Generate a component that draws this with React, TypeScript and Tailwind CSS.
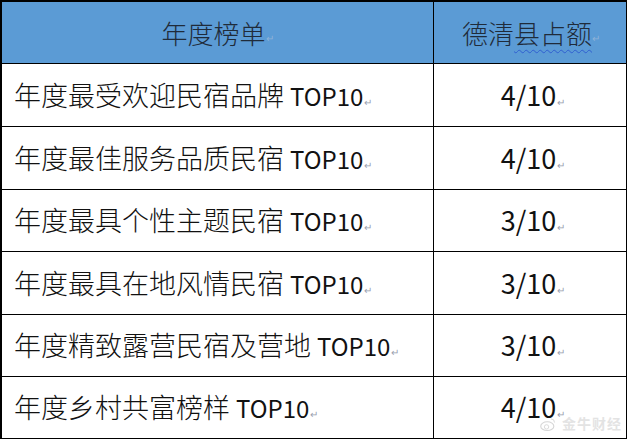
import React from "react";

const rows = [
  ["年度最受欢迎民宿品牌", "4/10"],
  ["年度最佳服务品质民宿", "4/10"],
  ["年度最具个性主题民宿", "3/10"],
  ["年度最具在地风情民宿", "3/10"],
  ["年度精致露营民宿及营地", "3/10"],
  ["年度乡村共富榜样", "4/10"],
];
const heights = ["h-[63px]", "h-[63px]", "h-[62px]", "h-[63px]", "h-[62px]", "h-[62px]"];

const Mark = () => <span className="text-[10px] text-gray-400 align-baseline ml-[1px]">↵</span>;

export default function App() {
  return (
    <div
      className="relative w-[630px] h-[440px] bg-white overflow-hidden"
      style={{ fontFamily: '"Noto Sans CJK SC", "Noto Sans", sans-serif' }}
    >
      <div className="w-[627px] border-l-2 border-t-2 border-black grid grid-cols-[432px_193px]">
        <div className="h-[62px] bg-[#5b9bd5] border-r border-b border-black flex items-center justify-center text-[26px] font-light text-[#1f2b3a]">
          <span>年度榜单</span>
          <span className="text-[10px] text-[#8fb2d8] self-end mb-[18px]">↵</span>
        </div>
        <div className="h-[62px] bg-[#5b9bd5] border-r border-b border-black flex items-center justify-center text-[26px] font-light text-[#1f2b3a] pl-[2px]">
          <span>
            德清
            <span className="underline decoration-wavy decoration-[#2f5fd0] decoration-1 underline-offset-[5px]">县占额</span>
          </span>
          <span className="text-[10px] text-[#8fb2d8] self-end mb-[18px]">↵</span>
        </div>
        {rows.map(([name, val], i) => (
          <React.Fragment key={i}>
            <div className={`${heights[i]} border-r border-b border-black flex items-center pl-[12px] text-[27px] text-[#111]`}>
              <span>
                <span className="font-light">{name}</span> <span className="text-[24px]">TOP10</span>
                <Mark />
              </span>
            </div>
            <div className={`${heights[i]} border-r border-b border-black flex items-center justify-center text-[27px] text-[#111]`}>
              <span className="ml-[6px]">
                {val}
                <Mark />
              </span>
            </div>
          </React.Fragment>
        ))}
      </div>
      <div className="absolute left-[540px] top-[413px] flex items-center gap-[6px] opacity-40">
        <svg width="16" height="18" viewBox="0 0 22 22">
          <ellipse cx="10" cy="14" rx="9" ry="6" fill="none" stroke="#999" strokeWidth="1.5" />
          <circle cx="9" cy="15" r="3" fill="none" stroke="#999" strokeWidth="1.2" />
          <path d="M15 4 a5 5 0 0 1 5 5" fill="none" stroke="#999" strokeWidth="1.2" />
        </svg>
        <span className="text-[14px] text-[#bbb] font-bold tracking-[1px]">金牛财经</span>
      </div>
    </div>
  );
}
